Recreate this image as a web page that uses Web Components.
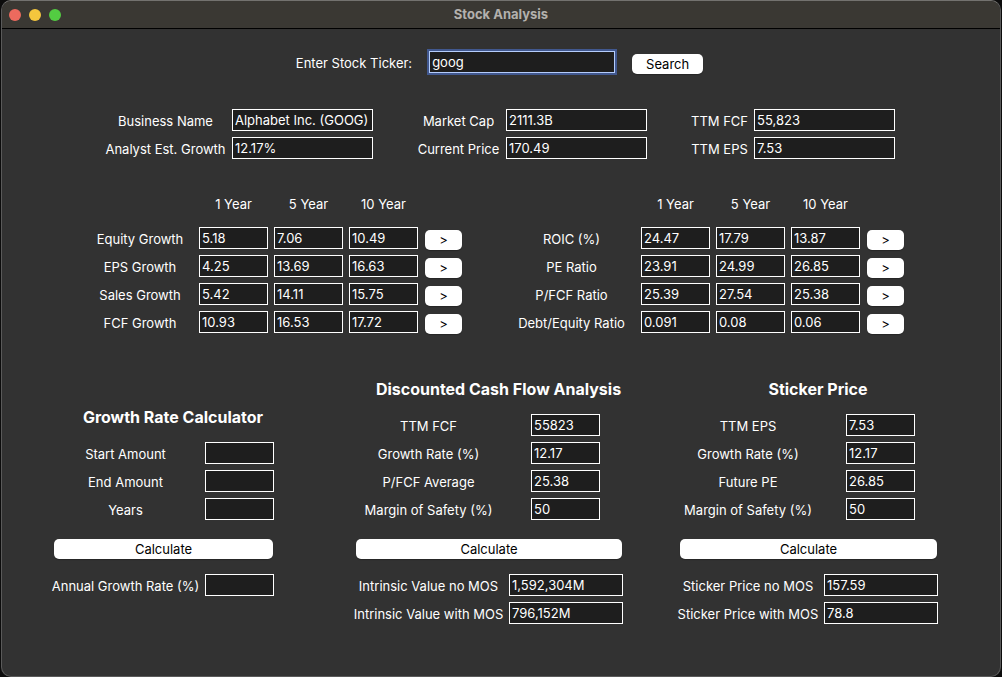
<!DOCTYPE html>
<html lang="en">
<head>
<meta charset="utf-8">
<title>Stock Analysis</title>
<style>
  body { margin: 0; background: #0c0c0c; color: #fff; font: 400 13px/24px Inter, "Liberation Sans", sans-serif; }
</style>
</head>
<body>
<app-window heading="Stock Analysis">
  <ticker-search value="goog"></ticker-search>
  <info-row>
    <info-group label-width="125" fields="Business Name=Alphabet Inc. (GOOG)|Analyst Est. Growth=12.17%"></info-group>
    <info-group label-width="87" fields="Market Cap=2111.3B|Current Price=170.49"></info-group>
    <info-group label-width="61" fields="TTM FCF=55,823|TTM EPS=7.53"></info-group>
  </info-row>
  <metric-row>
    <metric-table label-width="106" rows="Equity Growth=5.18;7.06;10.49|EPS Growth=4.25;13.69;16.63|Sales Growth=5.42;14.11;15.75|FCF Growth=10.93;16.53;17.72"></metric-table>
    <metric-table label-width="127" rows="ROIC (%)=24.47;17.79;13.87|PE Ratio=23.91;24.99;26.85|P/FCF Ratio=25.39;27.54;25.38|Debt/Equity Ratio=0.091;0.08;0.06"></metric-table>
  </metric-row>
  <calc-row>
    <calc-panel class="growth" heading="Growth Rate Calculator" label-width="151" result-width="69"
      inputs="Start Amount=|End Amount=|Years=" results="Annual Growth Rate (%)="></calc-panel>
    <calc-panel heading="Discounted Cash Flow Analysis" label-width="153" result-width="114"
      inputs="TTM FCF=55823|Growth Rate (%)=12.17|P/FCF Average=25.38|Margin of Safety (%)=50"
      results="Intrinsic Value no MOS=1,592,304M|Intrinsic Value with MOS=796,152M"></calc-panel>
    <calc-panel heading="Sticker Price" label-width="144" result-width="114"
      inputs="TTM EPS=7.53|Growth Rate (%)=12.17|Future PE=26.85|Margin of Safety (%)=50"
      results="Sticker Price no MOS=157.59|Sticker Price with MOS=78.8"></calc-panel>
  </calc-row>
</app-window>
<script>
const controls = `
  * { box-sizing: border-box; }
  input { display: block; height: 22px; margin: 0; padding: 0 2px; border: 1px solid #fff; border-radius: 0;
    outline: none; background: #1e1e1e; color: #fff; font: inherit; line-height: 20px; }
  button { display: block; height: 20px; margin: 0; padding: 0; border: 0; border-radius: 5px;
    background: #fff; color: #000; font: inherit; line-height: 20px; box-shadow: 0 1px 1px #0004; }
  label { display: block; text-align: center; white-space: nowrap; }
`;
const pairs = text => text.split('|').map(item => item.split('='));

class Base extends HTMLElement {
  constructor() { super(); this.attachShadow({ mode: 'open' }); }
  connectedCallback() {
    this.shadowRoot.innerHTML = `<style>${controls}${this.styles()}</style>${this.markup()}`;
  }
  attr(name) { return this.getAttribute(name); }
}

customElements.define('app-window', class extends Base {
  styles() { return `
    :host { display: block; min-height: 100vh; margin: 0 1px; box-sizing: border-box; background: #323232;
      border: 1px solid #5a5a5a; border-top-color: #73726f; border-radius: 10px; overflow: hidden; }
    header { display: grid; grid-template-columns: 1fr auto 1fr; height: 28px;
      background: #3a3833; border-bottom: 1px solid #000; }
    .lights { display: flex; align-items: center; gap: 8px; padding-left: 7px; }
    i { width: 12px; height: 12px; border-radius: 50%; background: #ed6a5e; }
    i:nth-child(2) { background: #f4c63d; }
    i:nth-child(3) { background: #53cc42; }
    h1 { margin: 0; font-size: 13px; line-height: 26px; font-weight: 700; color: #b3b1ad; }
    main { padding: 22px 0; }`; }
  markup() { return `<header><div class="lights"><i></i><i></i><i></i></div><h1>${this.attr('heading')}</h1></header>
    <main><slot></slot></main>`; }
});

customElements.define('ticker-search', class extends Base {
  styles() { return `
    :host { display: block; padding-right: 3px; }
    form { display: flex; justify-content: center; gap: 17px; height: 26px; margin: 0; }
    input { width: 186px; border-color: #b5cdfb; box-shadow: 0 0 0 2px #41588f; }
    button { width: 71px; align-self: center; }`; }
  markup() { return `<form onsubmit="return false"><label for="ticker">Enter Stock Ticker:</label>
    <input id="ticker" value="${this.attr('value')}"><button>Search</button></form>`; }
});

const row = (tag, css) => customElements.define(tag, class extends Base {
  styles() { return `:host { display: flex; justify-content: center; ${css} }`; }
  markup() { return '<slot></slot>'; }
});
row('info-row', 'gap: 42px; padding: 32px 4px 0 0;');
row('metric-row', 'gap: 34px; padding: 29px 11px 0 0;');
row('calc-row', 'gap: 53px; padding: 38px 14px 0 0;');

customElements.define('info-group', class extends Base {
  styles() { return `
    :host { display: grid; grid-template-columns: ${this.attr('label-width')}px 141px; gap: 4px; }
    input { width: 100%; }`; }
  markup() { return pairs(this.attr('fields')).map(([name, value], i) =>
    `<label for="f${i}">${name}</label><input id="f${i}" value="${value}">`).join(''); }
});

customElements.define('metric-table', class extends Base {
  styles() { return `
    :host { display: block; }
    table { border-spacing: 6px 2px; }
    th, td { padding: 0; font-weight: inherit; vertical-align: top; }
    thead tr { height: 33px; }
    tbody tr { height: 26px; }
    tbody th { width: ${this.attr('label-width')}px; }
    td:last-child { padding-left: 1px; vertical-align: middle; }
    input { width: 69px; }
    button { width: 37px; }`; }
  markup() {
    const body = pairs(this.attr('rows')).map(([name, values]) => `<tr><th scope="row">${name}</th>${
      values.split(';').map((v, i) => `<td><input value="${v}" aria-label="${name} ${[1, 5, 10][i]} Year"></td>`).join('')
    }<td><button type="button">&gt;</button></td></tr>`).join('');
    return `<table><thead><tr><td></td><th scope="col">1 Year</th><th scope="col">5 Year</th><th scope="col">10 Year</th><td></td></tr></thead><tbody>${body}</tbody></table>`;
  }
});

customElements.define('calc-panel', class extends Base {
  styles() { return `
    :host { display: block; --inset: 22px; }
    :host(.growth) { padding: 28px 25px 0 0; --inset: 0; }
    h2 { margin: 0 0 13px; padding-left: 22px; text-align: center; font-size: 16px; line-height: 24px; font-weight: 700; white-space: nowrap; }
    div { display: grid; grid-template-columns: ${this.attr('label-width')}px ${this.attr('result-width')}px; gap: 4px; }
    .inputs input { width: 69px; margin-left: var(--inset); }
    .results input { width: 100%; }
    button { width: calc(100% - 5px); margin: 17px 1px 15px 4px; }`; }
  fields(name) { return pairs(this.attr(name)).map(([label, value], i) =>
    `<label for="${name}${i}">${label}</label><input id="${name}${i}" value="${value}">`).join(''); }
  markup() { return `<h2>${this.attr('heading')}</h2><div class="inputs">${this.fields('inputs')}</div>
    <button type="button">Calculate</button><div class="results">${this.fields('results')}</div>`; }
});
</script>
</body>
</html>
